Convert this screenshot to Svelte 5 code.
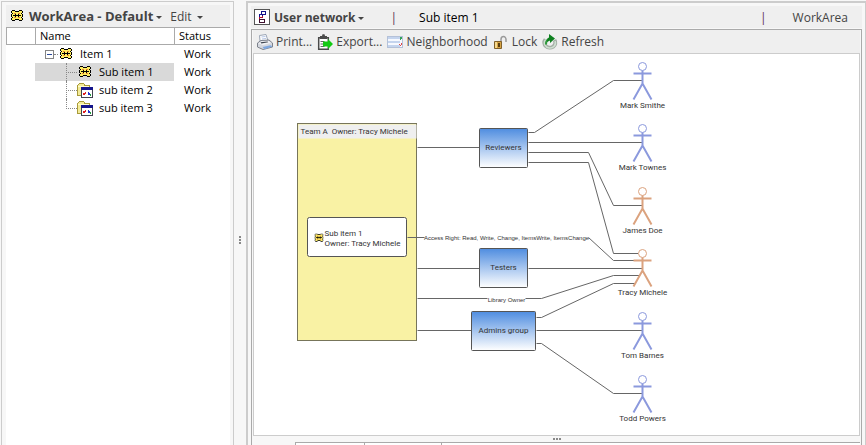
<script lang="ts">
  interface Row {
    name: string;
    status: string;
    level: number;
    icon: 'work' | 'folder';
    selected?: boolean;
    last?: boolean;
  }

  const rows: Row[] = [
    { name: 'Item 1', status: 'Work', level: 0, icon: 'work' },
    { name: 'Sub item 1', status: 'Work', level: 1, icon: 'work', selected: true },
    { name: 'sub item 2', status: 'Work', level: 1, icon: 'folder' },
    { name: 'sub item 3', status: 'Work', level: 1, icon: 'folder', last: true }
  ];

  const people = [
    { name: 'Mark Smithe', y: 12, color: '#8b99dd' },
    { name: 'Mark Townes', y: 74, color: '#8b99dd' },
    { name: 'James Doe', y: 137, color: '#dba27e' },
    { name: 'Tracy Michele', y: 199, color: '#dba27e' },
    { name: 'Tom Barnes', y: 262, color: '#8b99dd' },
    { name: 'Todd Powers', y: 325, color: '#8b99dd' }
  ];

  const groups = [
    { name: 'Reviewers', x: 225, y: 74, width: 48 },
    { name: 'Testers', x: 225, y: 194, width: 48 },
    { name: 'Admins group', x: 217, y: 257, width: 64 }
  ];

  const edges = [
    'M163 93H225',
    'M274 78H280L359 26H388',
    'M274 88H388',
    'M274 98H334L359 151H388',
    'M274 108H334L359 199H384',
    'M153 183H334L359 206H388',
    'M163 214H225',
    'M274 214H388',
    'M163 244H287L359 221H385',
    'M282 263H287L359 229H381',
    'M163 276H217',
    'M282 276H388',
    'M282 289H287L359 339H388'
  ];
</script>

{#snippet workShape()}
  <path fill="#ffee62" d="M1 1h10v9H1z" />
  <path fill="#000" d="M1 0h3v1h4V0h3v1H8v1H4V1H1zM0 1h1v2H0zM11 1h1v2h-1zM1 3h1v1H1zM10 3h1v1h-1zM0 4h1v3H0zM11 4h1v3h-1zM1 7h1v1H1zM10 7h1v1h-1zM0 8h1v2H0zM11 8h1v2h-1zM1 10h3V9h4v1h3v1H8v-1H4v1H1z" />
  <path fill="#e8862e" d="M3 3h2v1H3zM7 3h2v1H7zM3 7h2v1H3zM7 7h2v1H7z" />
  <path fill="#000" d="M2 5h8v1H2zM4 4h1v3H4zM7 4h1v3H7z" />
{/snippet}

{#snippet workIcon()}
  <svg class="work-icon" viewBox="0 0 12 12" shape-rendering="crispEdges" aria-hidden="true">
    {@render workShape()}
  </svg>
{/snippet}

{#snippet folderIcon()}
  <svg class="folder-icon" viewBox="0 0 16 16" shape-rendering="crispEdges" aria-hidden="true">
    <path fill="#a89a3a" d="M0 3h1V2h1V1h5v1h1v1h5v11H0z" />
    <path fill="#f3eb98" d="M1 3h1V2h5v2h5v9H1z" />
    <path fill="#fffbd0" d="M1 4h11v1H1z" />
    <path fill="#44444f" d="M4 5h12v11H4z" />
    <path fill="#14148c" d="M4 5h12v3H4z" />
    <path fill="#fff" d="M5 8h10v7H5z" />
    <path fill="#e02020" d="M6 11h2v-1h1v2H8v1H6z" />
    <path fill="#2030d0" d="M11 10h1v1h1v2h-2z" />
    <path fill="#20a040" d="M13 12h1v2h-1z" />
  </svg>
{/snippet}

<div class="app">
  <aside class="panel tree-panel">
    <header class="bar">
      {@render workIcon()}
      <button class="title">WorkArea - Default<i class="caret"></i></button>
      <button class="edit">Edit<i class="caret"></i></button>
    </header>
    <table class="tree">
      <thead>
        <tr>
          <th class="gutter" aria-label="Marker"></th>
          <th class="name">Name</th>
          <th class="status">Status</th>
        </tr>
      </thead>
      <tbody>
        {#each rows as row}
          <tr>
            <td></td>
            <td class:selected={row.selected}>
              <div class="node">
                {#if row.level === 0}
                  <button class="toggle" aria-label="Collapse"></button>
                  <span class="stub"></span>
                {:else}
                  <span class="branch" class:last={row.last}></span>
                {/if}
                <span class="icon">
                  {#if row.icon === 'work'}
                    {@render workIcon()}
                  {:else}
                    {@render folderIcon()}
                  {/if}
                </span>
                <span>{row.name}</span>
              </div>
            </td>
            <td class="status">{row.status}</td>
          </tr>
        {/each}
      </tbody>
    </table>
  </aside>

  <div class="splitter"><i></i><i></i><i></i></div>

  <main class="panel view-panel">
    <header class="bar">
      <svg class="net-icon" viewBox="0 0 16 16" shape-rendering="crispEdges" aria-hidden="true">
        <path fill="#555" d="M0 0h16v16H0z" />
        <path fill="#fff" d="M1 1h14v14H1z" />
        <path fill="#14148c" d="M7 2h5v1H7zM7 3h1v2H7zM11 3h1v2h-1zM5 5h7v1H5zM5 6h1v2H5zM8 6h1v1H8z" />
        <path fill="#b01030" d="M5 8h4v1H5zM8 7h1v1H8zM5 9h1v1H5z" />
        <path fill="#401030" d="M5 10h6v1H5zM5 11h1v2H5zM10 11h1v2h-1zM5 13h6v1H5z" />
      </svg>
      <button class="title">User network<i class="caret"></i></button>
      <span class="divider">|</span>
      <span class="current">Sub item 1</span>
      <span class="divider right">|</span>
      <span class="area">WorkArea</span>
    </header>
    <div class="view">
      <div class="toolbar">
        <button>
          <svg viewBox="0 0 16 16" aria-hidden="true">
            <path fill="#fff" stroke="#9aa4b4" d="M3 7L2.500 1.500 9 .5 11 7z" />
            <path stroke="#b8c8e8" d="M4.500 3l4-.6M5 5l4-.6" />
            <path fill="#d5d8df" stroke="#7d828c" d="M.5 9L4 6.500l8-.5 3.500 3v4L6 15.500.5 13z" />
            <path fill="#f2f3f6" d="M1.500 9.200L4.500 7.300l7-.4 2.500 2-8 2z" />
            <path fill="#3f4651" d="M3.500 8.200l7-.8.8.8-7 1.200z" />
            <path fill="#7fa8e0" d="M5.500 13l8-1.800 2 1.400-8 2.600z" />
          </svg>
          Print...
        </button>
        <button>
          <svg viewBox="0 0 16 16" aria-hidden="true">
            <path fill="#fff" stroke="#4a4a4a" stroke-width="1.500" d="M1.700 3.700h9.600v11.500H1.700z" />
            <path fill="#4a4a4a" d="M3 2h2l.5-1.800h2L8 2h2v3H3z" />
            <path stroke="#666" d="M3.500 7.500h4M3.500 10h3M3.500 12.500h4" />
            <path fill="#12c912" d="M6 7.500h5V5l5 5-5 5v-2.500H6z" />
          </svg>
          Export...
        </button>
        <button>
          <svg viewBox="0 0 16 16" shape-rendering="crispEdges" aria-hidden="true">
            <path fill="#b4c1d8" d="M0 2h16v12H0z" />
            <path fill="#f6f9ff" d="M1 3h14v10H1z" />
            <path fill="#c4d4ee" d="M1 3h12v2H1zM1 7h12v2H1zM1 11h12v2H1z" />
            <path fill="#35a05a" d="M13 3h2v2h-1v1h-1z" />
            <path fill="#e04848" d="M12 10h1v1h1v-2h1v2h-1v1h-1v-1h-1z" />
          </svg>
          Neighborhood
        </button>
        <button>
          <svg viewBox="0 0 16 16" aria-hidden="true">
            <path fill="none" stroke="#9a9a9a" stroke-width="1.500" d="M8 8V5.500a2.500 3 0 0 1 5 0V8" />
            <path fill="#d6a344" stroke="#80602a" d="M1.500 7.500h7v7h-7z" />
            <path fill="#f7d98c" d="M2 8h2v6H2z" />
            <path fill="#5b3f10" d="M5 9h2v4H5z" />
          </svg>
          Lock
        </button>
        <button>
          <svg viewBox="0 0 16 16" aria-hidden="true">
            <path fill="none" stroke="#a3ada5" stroke-width="4" d="M12.500 6a5.500 5 0 1 1-9-.5" />
            <path fill="none" stroke="#cfe0d1" stroke-width="1.500" d="M13 7a5.500 5 0 1 1-9.500-1" />
            <path fill="none" stroke="#2f9a3c" stroke-width="2" d="M4 10.500c0-4 2-6.500 5-6" />
            <path fill="#0f8020" d="M7 0l6 4.500L8 9V6.500L5 8c0-3 1-4 2-4.500z" />
          </svg>
          Refresh
        </button>
      </div>

      <div class="canvas">
        <svg class="diagram" width="440" height="376" viewBox="0 0 440 376" role="img" aria-label="User network">
          <defs>
            <linearGradient id="group-fill" x1="0" y1="0" x2="0" y2="1">
              <stop offset="0" stop-color="#4f8de0" />
              <stop offset="1" stop-color="#fff" />
            </linearGradient>
          </defs>

          <g transform="translate(.5 .5)">
            <rect class="box team" x="43" y="69" width="119" height="217" />
            <rect class="team-head" x="44" y="70" width="118" height="14" />
            <text x="46" y="79">Team A&nbsp; Owner: Tracy Michele</text>

            <rect class="box" x="53" y="163" width="99" height="39" rx="2" fill="#fff" />
            <svg x="60" y="179" width="9" height="9" viewBox="0 0 12 12">
              {@render workShape()}
            </svg>
            <text x="70" y="181">Sub item 1</text>
            <text x="70" y="191">Owner: Tracy Michele</text>

            {#each edges as edge}
              <path class="edge" d={edge} />
            {/each}

            <rect x="170" y="179" width="164" height="8" fill="#fff" />
            <text class="edge-label" x="252" y="185">Access Right: Read, Write, Change, ItemsWrite, ItemsChange</text>
            <rect x="233" y="241" width="38" height="7" fill="#fff" />
            <text class="edge-label" x="252" y="247">Library Owner</text>

            {#each groups as group}
              <rect class="box" x={group.x} y={group.y} width={group.width} height="39" rx="1" fill="url(#group-fill)" />
              <text class="centered" x={group.x + group.width / 2} y={group.y + 21}>{group.name}</text>
            {/each}

            {#each people as person}
              <g fill="none" stroke={person.color}>
                <circle cx="388" cy={person.y} r="4" fill="#fff" />
                <path stroke-width="2" d="M388 {person.y + 4}v13M379 {person.y + 7}h18M379 {person.y + 33}l9 -16l9 16" />
              </g>
              <text class="centered" x="388" y={person.y + 41}>{person.name}</text>
            {/each}
          </g>
        </svg>
      </div>

      <div class="grip"><i></i><i></i><i></i></div>
      <div class="tabs">
        <span></span>
        <span></span>
        <span></span>
      </div>
    </div>
  </main>
</div>

<style>
  :global(body) {
    background: #f7f7f7;
  }

  .app {
    display: flex;
    height: 100vh;
    overflow: hidden;
    font-family: 'Open Sans', 'Noto Sans', sans-serif;
    font-size: 12px;
    color: #000;
  }

  button {
    padding: 0;
    border: 0;
    background: none;
    font: inherit;
    color: #444;
    white-space: nowrap;
  }

  .panel {
    display: flex;
    flex-direction: column;
    box-sizing: border-box;
    border: 2px solid #ccc;
    border-bottom: 0;
    margin-top: 1px;
  }

  .tree-panel {
    flex: 0 0 233px;
    margin-left: 1px;
    padding: 3px 3px 0 4px;
    border-width: 1px;
  }

  .view-panel {
    flex: 1;
    min-width: 0;
    padding: 3px 3px 0;
    border-right-width: 1px;
  }

  .bar {
    display: flex;
    align-items: center;
    flex: none;
    height: 22px;
    padding-left: 5px;
    background: #efefef;
    white-space: nowrap;
  }

  .title {
    font-weight: 700;
  }

  .caret {
    display: inline-block;
    margin-left: 3px;
    border: 3px solid transparent;
    border-top-color: #444;
    border-bottom: 0;
    vertical-align: middle;
  }

  .work-icon {
    flex: none;
    width: 12px;
    height: 12px;
  }

  .folder-icon {
    flex: none;
    width: 16px;
    height: 16px;
  }

  .tree-panel .title {
    margin-left: 6px;
    font-size: 13px;
  }

  .edit {
    margin-left: 8px;
  }

  .edit .caret {
    margin-left: 5px;
  }

  .tree-panel::after {
    content: '';
    flex: 1;
    background: #fff;
  }

  .tree {
    width: 100%;
    table-layout: fixed;
    border-collapse: separate;
    border-spacing: 0;
    background: #fff;
    font-size: 11px;
    line-height: 16px;
  }

  .tree th {
    height: 15px;
    padding: 0 4px;
    border: 1px solid #aaa;
    border-right: 0;
    font-weight: 400;
    text-align: left;
  }

  .tree th.gutter {
    width: 20px;
  }

  .tree th.status {
    width: 47px;
  }

  .tree td {
    height: 18px;
    padding: 0;
  }

  .tree td.status {
    padding-left: 10px;
  }

  .selected {
    background: #d9d9d9;
  }

  .node {
    display: flex;
    align-items: center;
    height: 18px;
    padding-left: 10px;
  }

  .toggle {
    width: 9px;
    height: 9px;
    border: 1px solid #848484;
    background: linear-gradient(#2b4a9a, #2b4a9a) center / 5px 1px no-repeat #fff;
  }

  .stub {
    width: 4px;
    border-top: 1px dotted #888;
  }

  .branch {
    width: 10px;
    height: 18px;
    margin-left: 21px;
    border-left: 1px dotted #888;
    background: repeating-linear-gradient(90deg, transparent 0 1px, #888 1px 2px) center / 100% 1px no-repeat;
  }

  .branch.last {
    height: 10px;
    align-self: flex-start;
    background-position: bottom;
  }

  .icon {
    display: flex;
    justify-content: center;
    width: 16px;
    margin-right: 6px;
  }

  .splitter {
    display: flex;
    flex: 0 0 12px;
    flex-direction: column;
    align-items: center;
    justify-content: center;
    gap: 1px;
    padding-top: 34px;
  }

  .splitter i,
  .grip i {
    width: 2px;
    height: 2px;
    background: #888;
  }

  .net-icon {
    flex: none;
    width: 16px;
    height: 16px;
    margin: 0 4px 0 -2px;
  }

  .divider {
    margin-left: 26px;
    color: #5a3050;
  }

  .current {
    margin-left: 22px;
  }

  .divider.right {
    margin-left: auto;
  }

  .area {
    margin: 0 14px 0 26px;
    color: #444;
  }

  .view {
    display: flex;
    flex: 1;
    flex-direction: column;
    min-height: 0;
    margin-top: 1px;
    padding: 0 1px;
    border: 1px solid #aaa;
    border-bottom: 0;
  }

  .toolbar {
    display: flex;
    align-items: center;
    flex: none;
    gap: 5px;
    height: 23px;
    padding-left: 4px;
    background: #efefef;
  }

  .toolbar button {
    display: flex;
    align-items: center;
    gap: 3px;
  }

  .toolbar svg {
    width: 16px;
    height: 16px;
  }

  .canvas {
    flex: 1;
    min-height: 0;
    overflow: hidden;
    border: 1px solid #ccc;
    background: #fff;
  }

  .diagram {
    display: block;
    font-family: Roboto, 'Open Sans', sans-serif;
    font-size: 8px;
    fill: #333;
  }

  .box {
    stroke: #555;
  }

  .team {
    fill: #f9f2a4;
    stroke: #77755a;
  }

  .team-head {
    fill: #efefef;
  }

  .edge {
    fill: none;
    stroke: #666;
  }

  .edge-label {
    font-family: 'Liberation Sans', Arial, sans-serif;
    font-size: 6px;
    text-anchor: middle;
  }

  .centered {
    text-anchor: middle;
  }

  .grip {
    display: flex;
    flex: 0 0 6px;
    align-items: center;
    justify-content: center;
    gap: 1px;
  }

  .tabs {
    display: flex;
    flex: 0 0 2px;
    margin-left: 42px;
    border-top: 1px solid #aaa;
    background: #fff;
  }

  .tabs span {
    width: 76px;
    border-left: 1px solid #aaa;
  }

  .tabs span:first-child {
    width: 68px;
  }
</style>
